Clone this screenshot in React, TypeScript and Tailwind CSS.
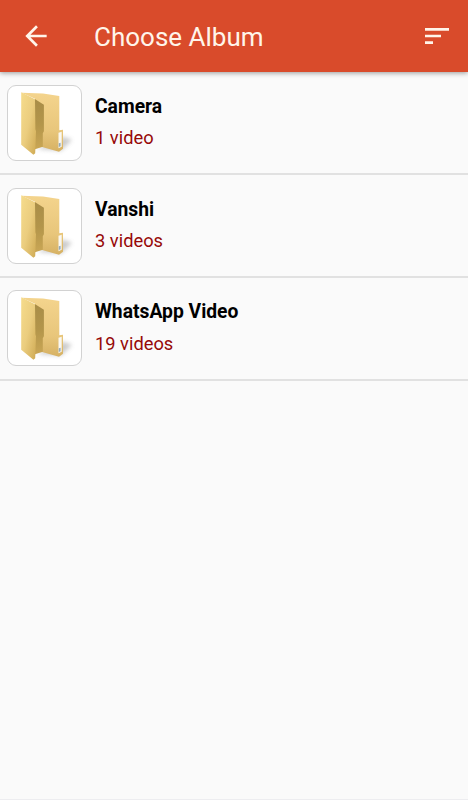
import { MdArrowBack, MdSort } from 'react-icons/md';

interface Album {
  name: string;
  count: number;
}

const albums: Album[] = [
  { name: 'Camera', count: 1 },
  { name: 'Vanshi', count: 3 },
  { name: 'WhatsApp Video', count: 19 },
];

function FolderIcon() {
  return (
    <svg viewBox="1 0.3 73.5 74" className="w-full h-full" aria-hidden="true">
      <defs>
        <linearGradient id="flap" x1="0" y1="0" x2="1" y2="1">
          <stop offset="0" stopColor="#f6dc8c" />
          <stop offset="0.5" stopColor="#ebcd7f" />
          <stop offset="1" stopColor="#cfaa54" />
        </linearGradient>
        <linearGradient id="back" x1="0" y1="0" x2="0" y2="1">
          <stop offset="0" stopColor="#f4d48d" />
          <stop offset="0.65" stopColor="#e8c67b" />
          <stop offset="1" stopColor="#d6b163" />
        </linearGradient>
        <linearGradient id="fold" x1="0" y1="0" x2="0" y2="1">
          <stop offset="0" stopColor="#a98d48" />
          <stop offset="0.5" stopColor="#b3954a" />
          <stop offset="1" stopColor="#c9a655" />
        </linearGradient>
        <filter id="soft" x="-50%" y="-50%" width="200%" height="200%">
          <feGaussianBlur stdDeviation="2" />
        </filter>
      </defs>
      <path d="M30 63 54 65 65 54 56 51Z" fill="#8c8c8c" opacity="0.45" filter="url(#soft)" />
      <path d="M14.5 7 36 7.8 52.3 10.2V44.5L56 44V63L52 66 36 61.5 28 59V13Z" fill="url(#back)" />
      <path d="M51.5 47 54.7 46V61L51.5 62.5Z" fill="#faf8f2" />
      <path d="M51.8 57.5 53.6 57V60.6L51.8 61.3Z" fill="#91a9bb" />
      <path d="M27.8 13.3 36.9 19V45.5L35.8 47.5V61L28 63.5Z" fill="url(#fold)" />
      <path d="M14.2 6.6 28 13.6 28.4 43.5 29 45.5 28.2 67.5 26.4 69 14.2 59Z" fill="url(#flap)" />
    </svg>
  );
}

function AlbumRow({ name, count }: Album) {
  return (
    <li className="flex h-[102.6px] border-b-2 border-[#e1e1e1] pl-[6.5px] pt-[12.4px]">
      <div className="w-[75.5px] h-[76px] shrink-0 overflow-hidden rounded-[9px] border border-[#d2d2d2] bg-white">
        <FolderIcon />
      </div>
      <div className="ml-[13px] pt-[9.7px]">
        <h2 className="text-[19.3px] leading-[24px] font-bold text-black">{name}</h2>
        <p className="mt-[7.5px] text-[18.3px] leading-[24px] text-[#960808]">
          {count} {count === 1 ? 'video' : 'videos'}
        </p>
      </div>
    </li>
  );
}

export default function App() {
  return (
    <div className="flex h-[800px] w-[468px] flex-col overflow-hidden border-b border-[#ededf0] bg-[#fafafa] font-[Roboto,sans-serif]">
      <header className="z-10 flex h-[72px] shrink-0 items-center bg-[#d94b2b] pl-[20px] pr-[15px] text-[#fff5ea] shadow-[0_1px_5px_rgba(0,0,0,0.4)]">
        <button aria-label="Back">
          <MdArrowBack size={32} />
        </button>
        <h1 className="ml-[42px] pt-[1px] text-[26px] leading-[32px]">Choose Album</h1>
        <button aria-label="Sort" className="ml-auto">
          <MdSort size={32} />
        </button>
      </header>
      <ul className="pt-[0.9px]">
        {albums.map((album) => (
          <AlbumRow key={album.name} {...album} />
        ))}
      </ul>
    </div>
  );
}
